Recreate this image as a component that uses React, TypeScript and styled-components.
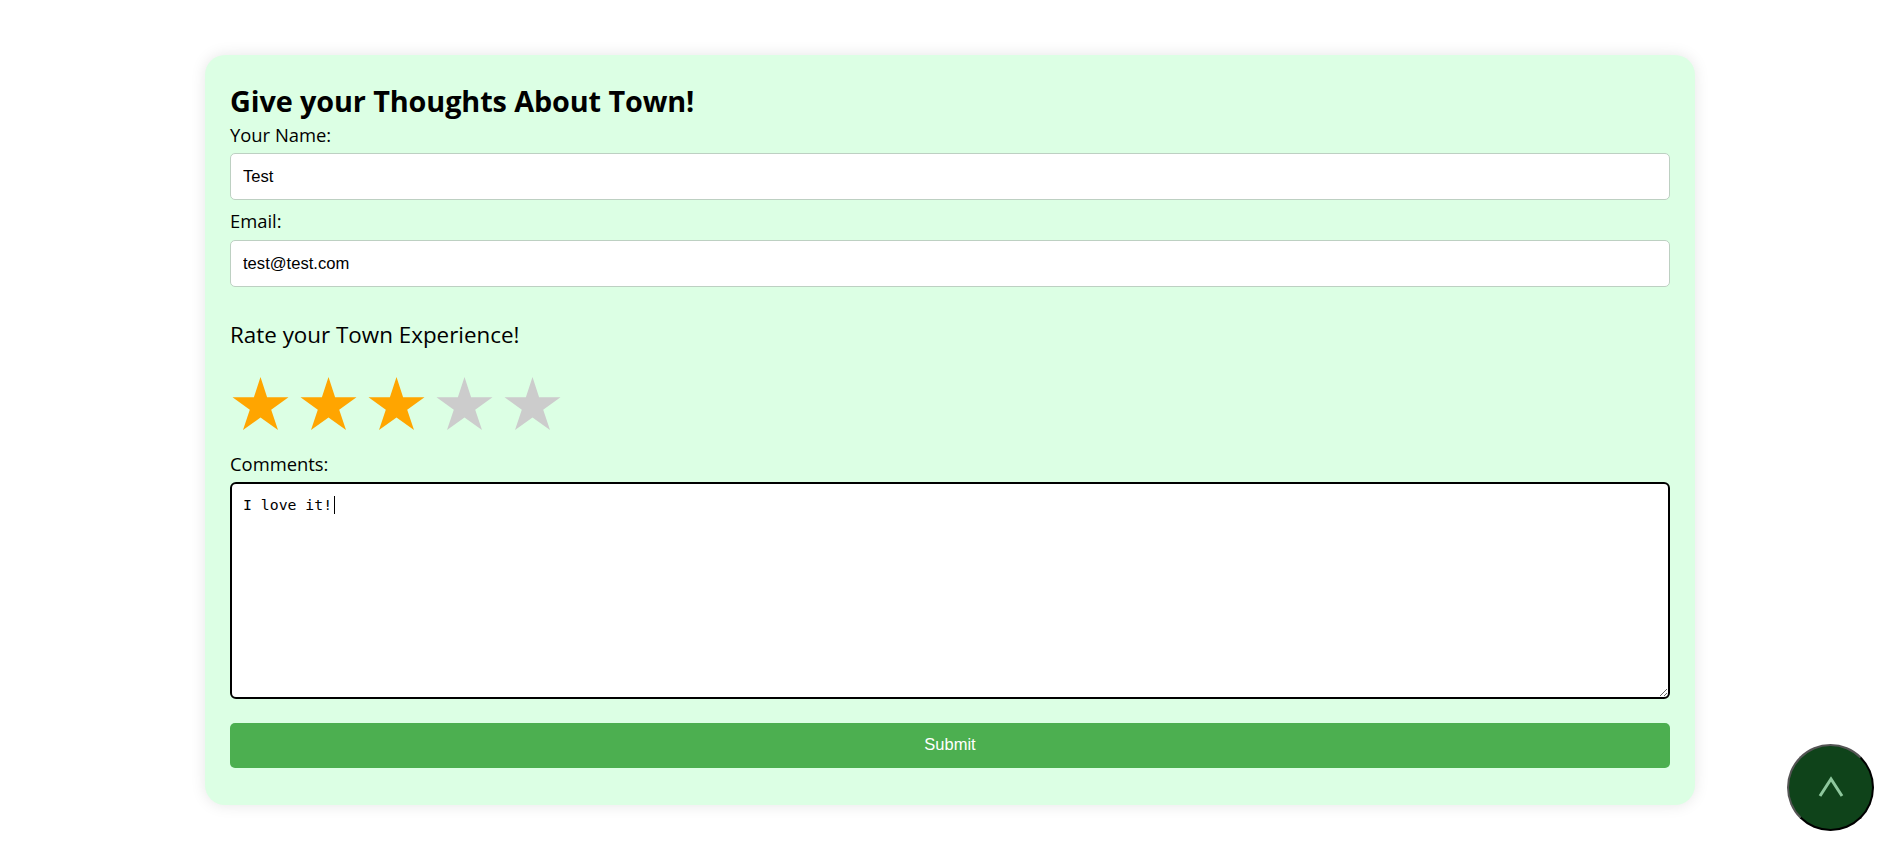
import React from 'react';
import styled, { createGlobalStyle } from 'styled-components';

const STAR_RATING = 3;
const STAR_COUNT = 5;

const GlobalStyle = createGlobalStyle`
    html, body {
        margin: 0;
        padding: 0;
        background: #fff;
        overflow: hidden;
    }
    body {
        font-family: "Open Sans", "Noto Sans", sans-serif;
        color: #000;
    }
`;

const Page = styled.div`
    height: 858px;
    padding: 55px 198px 0 205px;
    box-sizing: border-box;
`;

const Card = styled.form`
    display: flex;
    flex-direction: column;
    height: 750px;
    box-sizing: border-box;
    padding: 28px 25px 37px;
    background-color: #dcffe4;
    border-radius: 20px;
    box-shadow: 0 0 15px rgba(0, 0, 0, 0.1);
`;

const Title = styled.h2`
    margin: 0;
    font-size: 28.8px;
    line-height: 36px;
    font-weight: 700;
    letter-spacing: -0.1px;
`;

const FieldLabel = styled.label`
    display: block;
    height: ${p => p.$height}px;
    margin-top: ${p => p.$top}px;
    font-size: 18.4px;
    line-height: 24px;
`;

const TextInput = styled.input`
    display: block;
    width: 100%;
    height: 47px;
    box-sizing: border-box;
    padding: 0 12px;
    border: 1px solid #bdd0c2;
    border-radius: 5px;
    background: #fff;
    font-family: "Liberation Sans", Arial, sans-serif;
    font-size: 16.6px;
    color: #000;
    outline: none;
`;

const RateHeading = styled.h3`
    margin: 32px 0 0;
    font-size: 22.4px;
    line-height: 32px;
    font-weight: 400;
`;

const StarRow = styled.div`
    display: flex;
    margin: 26px 0 0;
    height: 53px;
`;

const StarIcon = styled.svg`
    display: block;
    width: 68px;
    height: 53px;
    fill: ${p => (p.$filled ? '#ffa500' : '#cccccc')};
`;

const TextAreaWrap = styled.div`
    position: relative;
    height: 217px;
`;

const Comments = styled.textarea`
    display: block;
    width: 100%;
    height: 100%;
    box-sizing: border-box;
    padding: 12px 11px;
    border: 2px solid #000;
    border-radius: 6px;
    background: #fff;
    font-family: "DejaVu Sans Mono", "Liberation Mono", monospace;
    font-size: 14.8px;
    line-height: 18px;
    color: #000;
    outline: none;
    resize: vertical;
    caret-color: transparent;
`;

const Caret = styled.span`
    position: absolute;
    left: 104px;
    top: 14px;
    width: 1px;
    height: 18px;
    background: #000;
`;

const SubmitButton = styled.button`
    display: block;
    width: 100%;
    height: 45px;
    margin-top: 24px;
    padding: 0 0 2px;
    border: none;
    border-radius: 5px;
    background-color: #4caf50;
    color: #fff;
    font-family: "Liberation Sans", Arial, sans-serif;
    font-size: 16.5px;
`;

const ScrollTopButton = styled.button`
    position: fixed;
    left: 1787px;
    top: 744px;
    width: 87px;
    height: 87px;
    padding: 0;
    display: flex;
    align-items: center;
    justify-content: center;
    border: 2px outset #000;
    border-radius: 50%;
    background-color: #0f431a;
`;

const ChevronIcon = styled.svg`
    display: block;
    width: 26px;
    height: 22px;
    margin-top: -1px;
    fill: none;
    stroke: #8ec79d;
    stroke-width: 3;
`;

const Star: React.FC<{ filled: boolean }> = ({ filled }) => (
    <StarIcon $filled={filled} viewBox="0 0 68 53" aria-hidden="true">
        <polygon points="30.5,0 37.1,20.2 58.5,20.2 41.2,32.8 48,53 30.5,40.5 13,53 19.8,32.8 2.5,20.2 23.9,20.2" />
    </StarIcon>
);

const App: React.FC = () => {
    return <Page>
        <GlobalStyle />
        <Card onSubmit={e => e.preventDefault()}>
            <Title>Give your Thoughts About Town!</Title>
            <FieldLabel htmlFor="name" $top={4} $height={30}>Your Name:</FieldLabel>
            <TextInput id="name" type="text" defaultValue="Test" />
            <FieldLabel htmlFor="email" $top={9} $height={31}>Email:</FieldLabel>
            <TextInput id="email" type="email" defaultValue="test@test.com" />
            <RateHeading>Rate your Town Experience!</RateHeading>
            <StarRow>
                {
                    Array.from({ length: STAR_COUNT }, (_, i) => <Star key={i} filled={i < STAR_RATING} />)
                }
            </StarRow>
            <FieldLabel htmlFor="comments" $top={22} $height={30}>Comments:</FieldLabel>
            <TextAreaWrap>
                <Comments id="comments" defaultValue="I love it!" />
                <Caret />
            </TextAreaWrap>
            <SubmitButton type="submit">Submit</SubmitButton>
        </Card>
        <ScrollTopButton type="button" aria-label="Back to top">
            <ChevronIcon viewBox="0 0 26 22" aria-hidden="true">
                <polyline points="2,20 13,3 24,20" />
            </ChevronIcon>
        </ScrollTopButton>
    </Page>;
};

export default App;
